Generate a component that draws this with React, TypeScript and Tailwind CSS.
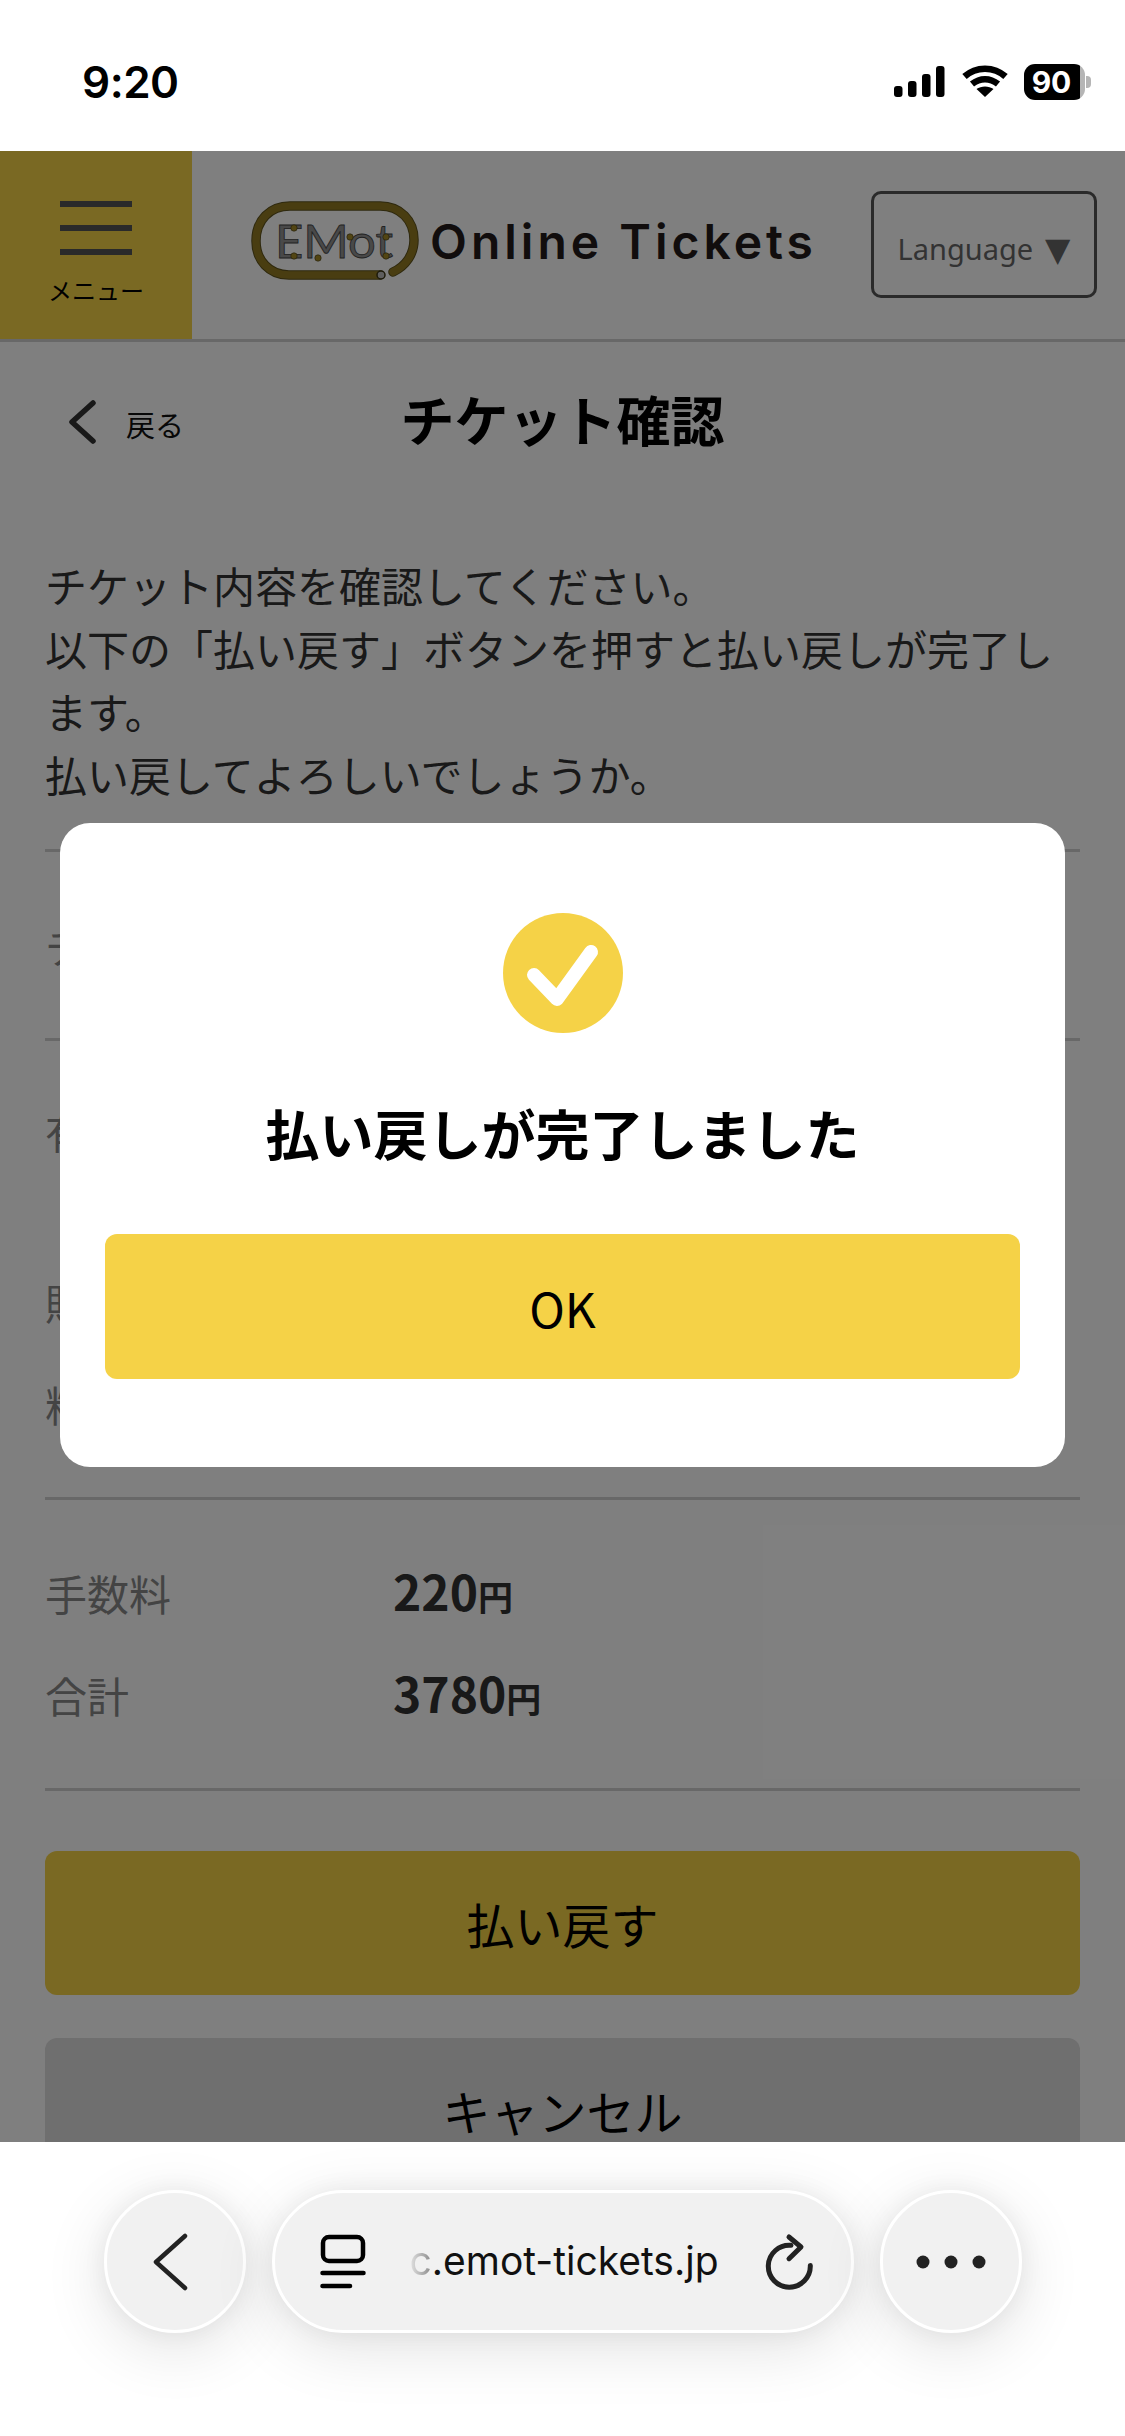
const JP = "font-['Noto_Sans_CJK_JP','Noto_Sans',sans-serif]";

function StatusBar() {
  return (
    <div className="h-[151px] shrink-0 bg-white flex items-center pl-[82px] pr-[34px] pt-[12px]">
      <span className="font-['Inter',sans-serif] text-[44px] font-semibold text-black tracking-[-0.5px]">9:20</span>
      <div className="ml-auto flex items-center">
        <svg width="51" height="32" viewBox="0 0 51 32" fill="#000">
          <rect x="0" y="20" width="8.5" height="11" rx="3" />
          <rect x="14" y="15" width="8.5" height="16" rx="3" />
          <rect x="28" y="8" width="8.5" height="23" rx="3" />
          <rect x="42" y="0" width="8.5" height="31" rx="3" />
        </svg>
        <svg className="ml-[17px]" width="46" height="33" viewBox="0 0 46 33" fill="none" stroke="#000" strokeWidth="6.5">
          <path d="M2.5 11.5C14 1 32 1 43.5 11.5" />
          <path d="M10 19C18 12.5 28 12.5 36 19" />
          <path d="M23 32L14.5 24C19 20.5 27 20.5 31.5 24Z" fill="#000" stroke="none" />
        </svg>
        <div className="ml-[16px] w-[61px] h-[36px] rounded-[11px] bg-[linear-gradient(90deg,#000_92%,#b5b5b5_92%)] flex items-center justify-center pr-[6px]">
          <span className="font-['Inter',sans-serif] text-[30px] font-bold text-white leading-none">90</span>
        </div>
        <div className="ml-[1px] w-[5px] h-[12px] rounded-r-[4px] bg-[#b5b5b5]" />
      </div>
    </div>
  );
}

function Logo() {
  return (
    <svg width="170" height="84" viewBox="0 0 170 84" fill="none">
      <path d="M130 75H39C19 75 6 60 6 41C6 20 20 6 40 6H130C150 6 164 20 164 40C164 54 156 66 143 72" stroke="#5c511d" strokeWidth="9.5" strokeLinecap="round" />
      <path d="M130 75H39C19 75 6 60 6 41C6 20 20 6 40 6H130C150 6 164 20 164 40C164 54 156 66 143 72" stroke="#937b22" strokeWidth="7.5" strokeLinecap="round" />
      <circle cx="131" cy="75" r="4" fill="#bdbdbd" stroke="#3a3413" strokeWidth="1.5" />
      <text x="25" y="58" textLength="118" lengthAdjust="spacingAndGlyphs" fontFamily="Lato, sans-serif" fontWeight="400" fontSize="46" fill="#929292" stroke="#444" strokeWidth="0.8">EMot</text>
      {[[44, 28], [44, 56], [68, 58], [100, 37], [136, 37], [136, 56]].map(([cx, cy]) => (
        <circle key={`${cx}-${cy}`} cx={cx} cy={cy} r="3.2" fill="#a58a26" stroke="#3a3413" strokeWidth="0.6" />
      ))}
    </svg>
  );
}

function Header() {
  return (
    <div className="h-[191px] shrink-0 flex border-b-[3px] border-[#d0d0d0]">
      <div className="w-[192px] bg-[#f5d247] flex flex-col items-center pt-[50px]">
        <div className="flex flex-col gap-[18px]">
          <div className="w-[72px] h-[6px] bg-[#555]" />
          <div className="w-[72px] h-[6px] bg-[#555]" />
          <div className="w-[72px] h-[6px] bg-[#555]" />
        </div>
        <span className={`${JP} mt-[20px] text-[24px] leading-[30px] text-black`}>メニュー</span>
      </div>
      <div className="ml-[58px] mb-[6px] flex items-center">
        <Logo />
        <span className="ml-[10px] font-['Inter',sans-serif] text-[48px] font-semibold text-[#221a1a] tracking-[4px] leading-none">Online Tickets</span>
      </div>
      <div className="ml-auto mr-[28px] mt-[40px] w-[226px] h-[107px] border-[3px] border-[#555] rounded-[10px] flex items-center justify-center pt-[9px]">
        <span className="font-['Noto_Sans',sans-serif] text-[29px] text-[#666]">Language</span>
        <span className="ml-[12px] text-[#666] font-['DejaVu_Sans',sans-serif] text-[33px] leading-none">▼</span>
      </div>
    </div>
  );
}

function Row({ label, value }: { label: string; value?: string }) {
  return (
    <div className="flex h-[63px] items-center">
      <span className="w-[348px] text-[42px] leading-[63px] text-[#888]">{label}</span>
      {value && <span className="text-[42px] leading-[63px] text-[#333]">{value}</span>}
    </div>
  );
}

function PriceRow({ label, price }: { label: string; price: string }) {
  return (
    <div className="flex h-[63px] items-center">
      <span className="w-[348px] text-[42px] leading-[63px] text-[#888]">{label}</span>
      <span className="text-[48px] font-bold leading-[63px] text-[#333]">
        {price}
        <span className="text-[35px]">円</span>
      </span>
    </div>
  );
}

function Page() {
  return (
    <div className={`${JP} bg-white h-full`}>
      <Header />
      <div className="h-[156px] grid grid-cols-[1fr_auto_1fr] items-center">
        <div className="pl-[68px] flex items-center">
          <svg className="mt-[4px]" width="28" height="44" viewBox="0 0 28 44" fill="none" stroke="#333" strokeWidth="5.5" strokeLinecap="round" strokeLinejoin="round">
            <path d="M25 3L4 22L25 41" />
          </svg>
          <span className="ml-[30px] mt-[10px] text-[29px] text-[#111]">戻る</span>
        </div>
        <h1 className="mb-[3px] text-[54px] font-bold text-black leading-none">チケット確認</h1>
      </div>
      <div className="px-[45px]">
        <p className="mt-[55px] text-[42px] leading-[63px] text-[#333]">
          チケット内容を確認してください。<br />
          以下の「払い戻す」ボタンを押すと払い戻しが完了します。<br />
          払い戻してよろしいでしょうか。
        </p>
        <div className="mt-[44px] border-t-[3px] border-[#d0d0d0] h-[189px] flex items-center">
          <Row label="チケット名" value="EMot乗車券" />
        </div>
        <div className="border-t-[3px] border-[#d0d0d0] pt-[58px] pb-[62px]">
          <Row label="有効期限" value="2023年12月31日" />
          <div className="mt-[108px]">
            <Row label="販売金額" value="4000円" />
          </div>
          <div className="mt-[39px]">
            <Row label="料金区分" value="大人" />
          </div>
        </div>
        <div className="border-t-[3px] border-[#d0d0d0] pt-[61px] pb-[62px]">
          <PriceRow label="手数料" price="220" />
          <div className="mt-[39px]">
            <PriceRow label="合計" price="3780" />
          </div>
        </div>
        <div className="border-t-[3px] border-[#d0d0d0] pt-[60px]">
          <button className="w-full h-[144px] rounded-[12px] bg-[#f5d247] text-[48px] text-black">払い戻す</button>
          <button className="mt-[43px] w-full h-[144px] rounded-[12px] bg-[#dedede] text-[48px] text-black">キャンセル</button>
        </div>
      </div>
    </div>
  );
}

function Modal() {
  return (
    <div className="absolute inset-0 bg-black/50 flex items-center justify-center pb-[3px]">
      <div className={`${JP} w-[1005px] rounded-[30px] bg-white px-[45px] pt-[90px] pb-[88px] flex flex-col items-center`}>
        <div className="w-[120px] h-[120px] rounded-full bg-[#f5d247]">
          <svg width="120" height="120" viewBox="0 0 120 120" fill="none" stroke="#fff" strokeWidth="14" strokeLinecap="round" strokeLinejoin="round">
            <path d="M31 62L54 86L88 39" />
          </svg>
        </div>
        <h2 className="mt-[60px] text-[54px] leading-[80px] font-bold text-black">払い戻しが完了しました</h2>
        <button className="mt-[61px] w-full h-[145px] rounded-[12px] bg-[#f5d247] text-[48px] text-black">OK</button>
      </div>
    </div>
  );
}

function BottomBar() {
  const round = "h-[143px] rounded-full bg-[#f1f1f1] border-[3px] border-white shadow-[0_0_24px_rgba(0,0,0,0.06),0_14px_64px_rgba(0,0,0,0.12)] flex items-center";
  return (
    <div className="h-[294px] shrink-0 bg-white relative flex justify-center gap-[26px] pt-[48px]">
      <div className={`${round} w-[142px] justify-center`}>
        <svg className="mr-[10px]" width="36" height="60" viewBox="0 0 36 60" fill="none" stroke="#222" strokeWidth="4.5" strokeLinecap="round" strokeLinejoin="round">
          <path d="M33 4L4 30L33 56" />
        </svg>
      </div>
      <div className={`${round} w-[582px] pl-[45px]`}>
        <svg width="46" height="56" viewBox="0 0 46 56" fill="none" stroke="#000" strokeWidth="4.5" strokeLinecap="round">
          <rect x="3" y="3" width="40" height="24" rx="6" />
          <path d="M2.5 39H43.5" />
          <path d="M2.5 52H30" />
        </svg>
        <span className="ml-[44px] font-['Inter',sans-serif] text-[39px] text-[#111]">
          <span className="bg-linear-to-r from-[#e2e2e2] to-[#8a8a8a] bg-clip-text text-transparent">c</span>
          .emot-tickets.jp
        </span>
        <svg className="ml-auto mr-[30px]" width="60" height="60" viewBox="20 10 60 60" fill="none" stroke="#222" strokeWidth="5" strokeLinecap="round" strokeLinejoin="round">
          <path d="M69.3 43.5A21 21 0 1 1 50 23.3" />
          <path d="M48 15L60 25L48 36.7" />
        </svg>
      </div>
      <div className={`${round} w-[142px] justify-center`}>
        <svg width="70" height="14" viewBox="0 0 70 14" fill="#222">
          <circle cx="7" cy="7" r="6.5" />
          <circle cx="35" cy="7" r="6.5" />
          <circle cx="63" cy="7" r="6.5" />
        </svg>
      </div>
    </div>
  );
}

export default function App() {
  return (
    <div className="w-[1125px] h-[2436px] flex flex-col overflow-hidden bg-white">
      <StatusBar />
      <div className="relative flex-1 overflow-hidden">
        <Page />
        <Modal />
      </div>
      <BottomBar />
    </div>
  );
}
